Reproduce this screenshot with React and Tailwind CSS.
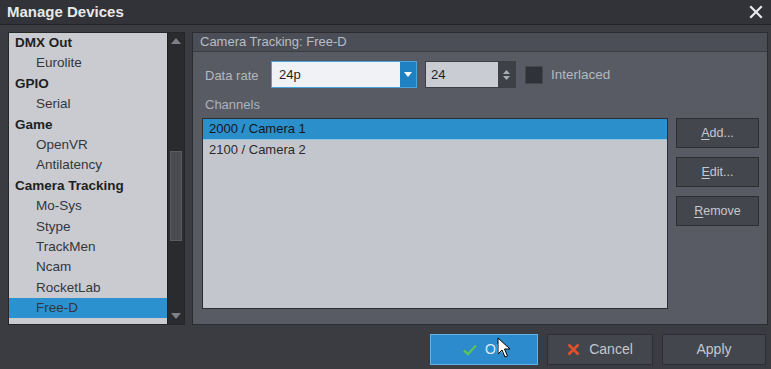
import React from "react";

const font = { fontFamily: '"Liberation Sans", Arial, sans-serif' };

const items = [
  { t: "DMX Out", b: true },
  { t: "Eurolite" },
  { t: "GPIO", b: true },
  { t: "Serial" },
  { t: "Game", b: true },
  { t: "OpenVR" },
  { t: "Antilatency" },
  { t: "Camera Tracking", b: true },
  { t: "Mo-Sys" },
  { t: "Stype" },
  { t: "TrackMen" },
  { t: "Ncam" },
  { t: "RocketLab" },
  { t: "Free-D", sel: true },
  { t: "Vinten" },
];

function SideBtn({ u, rest }) {
  return (
    <div className="h-[30px] w-[83px] flex items-center justify-center bg-[#43464d] border border-[#2c2e33] text-[12.5px] text-[#c5c9d0]">
      <span className="underline underline-offset-2">{u}</span>
      <span>{rest}</span>
    </div>
  );
}

export default function App() {
  return (
    <div className="w-[771px] h-[369px] bg-[#3a3c41] overflow-hidden flex flex-col relative" style={font}>
      {/* Title bar */}
      <div className="h-[25px] shrink-0 flex items-center justify-between pl-[7px] pr-[8px] bg-[#313338] border-b border-[#232428]">
        <span className="text-[15px] font-bold text-[#e6e8ec]">Manage Devices</span>
        <svg width="14" height="14" viewBox="0 0 14 14">
          <path d="M2 2 L12 12 M12 2 L2 12" stroke="#e8eaee" strokeWidth="2.2" strokeLinecap="square" />
        </svg>
      </div>

      {/* Body */}
      <div className="flex gap-[7px] pl-[8px] pr-[3px] pt-[7px] h-[301px] shrink-0">
        {/* Left list */}
        <div className="w-[178px] h-[293px] flex border border-[#25272b]">
          <div className="w-[158px] bg-[#c9cbd1] overflow-hidden flex flex-col">
            {items.map((it, i) => (
              <div
                key={i}
                className={
                  "h-[20.4px] shrink-0 flex items-center text-[13.5px] " +
                  (it.b ? "pl-[6px] font-bold text-[#1e1f22] " : "pl-[27px] text-[#35363a] ") +
                  (it.sel ? "bg-[#2b92cf]" : "")
                }
              >
                {it.t}
              </div>
            ))}
          </div>
          <div className="flex-1 bg-[#2a2b2f] border-l border-[#1e1f22] flex flex-col items-center justify-between py-[5px]">
            <svg width="10" height="6" viewBox="0 0 10 6"><path d="M0 6 L5 0 L10 6 Z" fill="#7d8088" /></svg>
            <div className="flex-1 w-full flex flex-col items-center pt-[107px] pb-[72px]">
              <div className="w-[12px] flex-1 bg-[#4a4c52] border border-[#5a5c62]" />
            </div>
            <svg width="10" height="6" viewBox="0 0 10 6"><path d="M0 0 L10 0 L5 6 Z" fill="#7d8088" /></svg>
          </div>
        </div>

        {/* Right panel */}
        <div className="flex-1 h-[293px] border border-[#2a2c31] bg-[#585b63] flex flex-col">
          <div className="h-[19px] shrink-0 bg-[#4b4e56] border-b border-[#3a3c42] flex items-center pl-[7px] text-[13px] text-[#b9bdc5]">
            Camera Tracking: Free-D
          </div>
          <div className="flex flex-col pl-[9px] pr-[8px] pt-[9px]">
            <div className="flex items-center h-[27px]">
              <span className="w-[69px] pl-[3px] pt-[2px] text-[13px] text-[#b4b8c0]">Data rate</span>
              <div className="w-[146px] h-[27px] flex border border-[#4aa3dc] bg-[#f0f2f5]">
                <span className="flex-1 flex items-center pl-[7px] text-[13px] text-[#1e1f22]">24p</span>
                <div className="w-[16px] bg-[#1f80c2] flex items-center justify-center">
                  <svg width="8" height="5" viewBox="0 0 8 5"><path d="M0 0 L8 0 L4 5 Z" fill="#ffffff" /></svg>
                </div>
              </div>
              <div className="ml-[8px] w-[91px] h-[27px] flex border border-[#3d3f45] bg-[#c9ccd2]">
                <span className="flex-1 flex items-center pl-[5px] text-[13px] text-[#1e1f22]">24</span>
                <div className="w-[17px] bg-[#3d4046] flex flex-col items-center justify-center gap-[2px]">
                  <svg width="7" height="4" viewBox="0 0 7 4"><path d="M0 4 L3.5 0 L7 4 Z" fill="#a8acb4" /></svg>
                  <svg width="7" height="4" viewBox="0 0 7 4"><path d="M0 0 L7 0 L3.5 4 Z" fill="#a8acb4" /></svg>
                </div>
              </div>
              <div className="ml-[9px] w-[18px] h-[18px] bg-[#30323a] border border-[#45474e]" />
              <span className="ml-[8px] pt-[1px] text-[13.5px] text-[#b4b8c0]">Interlaced</span>
            </div>
            <div className="h-[30px] flex items-center pt-[4px] pl-[3px] text-[13px] text-[#aeb2ba]">Channels</div>
            <div className="flex gap-[8px]">
              <div className="w-[466px] h-[191px] bg-[#c4c6cd] border border-[#2b2d32] flex flex-col">
                <div className="h-[20px] bg-[#2b8fcc] flex items-center pl-[6px] text-[13px] text-[#14171b]">2000 / Camera 1</div>
                <div className="h-[20px] flex items-center pl-[6px] text-[13px] text-[#2a2b2f] border-t border-[#8fc1e3]">2100 / Camera 2</div>
              </div>
              <div className="flex flex-col gap-[9px]">
                <SideBtn u="A" rest="dd..." />
                <SideBtn u="E" rest="dit..." />
                <SideBtn u="R" rest="emove" />
              </div>
            </div>
          </div>
        </div>
      </div>

      {/* Footer */}
      <div className="flex justify-end gap-[9px] pr-[5px] pt-[8px]">
        <div className="w-[108px] h-[31px] bg-[#2b8bcd] border border-[#62b3e8] flex items-center justify-center gap-[8px] text-[14px] text-[#dcecf8]">
          <svg width="14" height="12" viewBox="0 0 14 12"><path d="M1 6.5 L5 10 L13 1.5" stroke="#5cc15a" strokeWidth="2.4" fill="none" /></svg>
          <span>OK</span>
        </div>
        <div className="w-[106px] h-[31px] bg-[#43464d] border border-[#2c2e33] flex items-center justify-center gap-[9px] text-[14px] text-[#c3c7ce]">
          <svg width="13" height="13" viewBox="0 0 13 13"><path d="M1.5 1.5 L11.5 11.5 M11.5 1.5 L1.5 11.5" stroke="#e2502c" strokeWidth="2.6" /></svg>
          <span>Cancel</span>
        </div>
        <div className="w-[104px] h-[31px] bg-[#43464d] border border-[#2c2e33] flex items-center justify-center text-[14px] text-[#c3c7ce]">
          Apply
        </div>
      </div>

      {/* Mouse cursor overlay */}
      <svg className="absolute left-[497px] top-[337px]" width="14" height="22" viewBox="0 0 14 22">
        <path d="M1 1 L1 17 L5 13 L8 20 L10.5 19 L7.5 12 L13 12 Z" fill="#ffffff" stroke="#000000" strokeWidth="1" strokeLinejoin="round" />
      </svg>
    </div>
  );
}
